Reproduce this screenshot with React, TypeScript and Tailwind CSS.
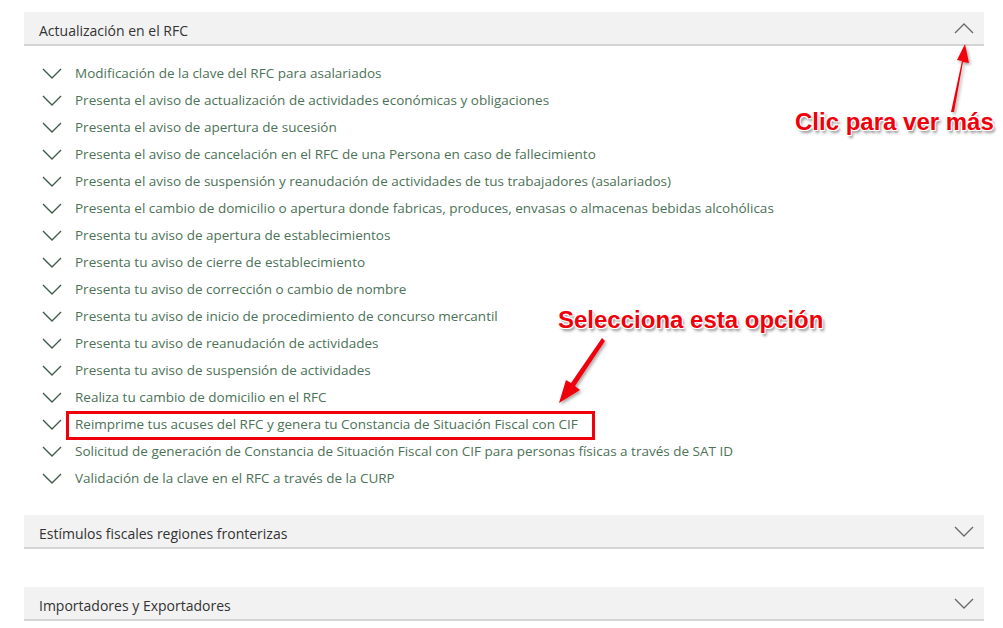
const items = [
  "Modificación de la clave del RFC para asalariados",
  "Presenta el aviso de actualización de actividades económicas y obligaciones",
  "Presenta el aviso de apertura de sucesión",
  "Presenta el aviso de cancelación en el RFC de una Persona en caso de fallecimiento",
  "Presenta el aviso de suspensión y reanudación de actividades de tus trabajadores (asalariados)",
  "Presenta el cambio de domicilio o apertura donde fabricas, produces, envasas o almacenas bebidas alcohólicas",
  "Presenta tu aviso de apertura de establecimientos",
  "Presenta tu aviso de cierre de establecimiento",
  "Presenta tu aviso de corrección o cambio de nombre",
  "Presenta tu aviso de inicio de procedimiento de concurso mercantil",
  "Presenta tu aviso de reanudación de actividades",
  "Presenta tu aviso de suspensión de actividades",
  "Realiza tu cambio de domicilio en el RFC",
  "Reimprime tus acuses del RFC y genera tu Constancia de Situación Fiscal con CIF",
  "Solicitud de generación de Constancia de Situación Fiscal con CIF para personas físicas a través de SAT ID",
  "Validación de la clave en el RFC a través de la CURP",
]

function Chevron({ up = false, color }: { up?: boolean; color: string }) {
  return (
    <svg width="20" height="11" viewBox="0 0 20 11" fill="none">
      <polyline
        points={up ? "1,10 10,1 19,10" : "1,1 10,10 19,1"}
        stroke={color}
        strokeWidth="1.4"
      />
    </svg>
  )
}

function PanelHeader({ title, open = false }: { title: string; open?: boolean }) {
  return (
    <div className="flex h-[34px] items-center justify-between border-b-2 border-[#d4d4d4] bg-[#f2f2f2] pl-[15px] pr-[10px]">
      <span className="pt-[5px] text-[14px] text-[#333]">{title}</span>
      <span className="pt-[1px]">
        <Chevron up={open} color="#6b6b6b" />
      </span>
    </div>
  )
}

const label =
  "font-['Liberation_Sans',Arial,sans-serif] font-bold text-[#f0000a] [text-shadow:-1px_-1px_0_#fff,1px_-1px_0_#fff,-1px_1px_0_#fff,1px_1px_0_#fff,2px_3px_3px_rgba(0,0,0,0.45)]"

export default function App() {
  return (
    <div className="relative h-[628px] w-[1003px] overflow-hidden bg-white font-['Open_Sans',sans-serif]">
      <div className="pl-[24px] pr-[19px] pt-[12px]">
        <PanelHeader title="Actualización en el RFC" open />
        <ul className="pt-[14px] pb-[23px]">
          {items.map((t) => (
            <li key={t} className="flex h-[27px] items-center pl-[18px]">
              <span className="mr-[13px] flex w-[20px] shrink-0">
                <Chevron color="#3e5c49" />
              </span>
              <span className="text-[13.5px] text-[#4c7257] whitespace-nowrap">{t}</span>
            </li>
          ))}
        </ul>
        <PanelHeader title="Estímulos fiscales regiones fronterizas" />
        <div className="h-[38px]" />
        <PanelHeader title="Importadores y Exportadores" />
      </div>

      {/* annotations */}
      <div className="absolute left-[66px] top-[411px] h-[29px] w-[529px] border-[3px] border-[#f0000a]" />

      <div className={`absolute left-[795px] top-[107px] text-[24px] leading-[30px] whitespace-nowrap ${label}`}>
        Clic para ver más
      </div>
      <div className={`absolute left-[558px] top-[305px] text-[24px] leading-[30px] whitespace-nowrap ${label}`}>
        Selecciona esta opción
      </div>

      <svg className="absolute left-0 top-0" width="1003" height="628" viewBox="0 0 1003 628">
        <defs>
          <filter id="sh" x="-50%" y="-50%" width="200%" height="200%">
            <feDropShadow dx="1.5" dy="2" stdDeviation="1.5" floodColor="#000" floodOpacity="0.35" />
          </filter>
        </defs>
        <g filter="url(#sh)" fill="#f0000a">
          <polygon points="951,112 954,112 963,62 969,63 965,44 957,60 962,61" />
          <polygon points="602,338 605,341 575,386 580,390 559,403 566,380 571,383" />
        </g>
      </svg>
    </div>
  )
}
